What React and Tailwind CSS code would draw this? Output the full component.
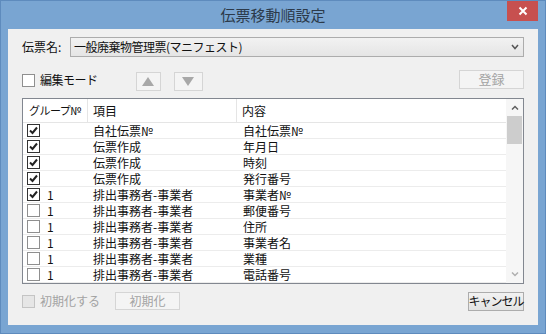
import React from 'react';

const rows = [
  { checked: true, group: '', item: '自社伝票№', content: '自社伝票№' },
  { checked: true, group: '', item: '伝票作成', content: '年月日' },
  { checked: true, group: '', item: '伝票作成', content: '時刻' },
  { checked: true, group: '', item: '伝票作成', content: '発行番号' },
  { checked: true, group: '1', item: '排出事務者-事業者', content: '事業者№' },
  { checked: false, group: '1', item: '排出事務者-事業者', content: '郵便番号' },
  { checked: false, group: '1', item: '排出事務者-事業者', content: '住所' },
  { checked: false, group: '1', item: '排出事務者-事業者', content: '事業者名' },
  { checked: false, group: '1', item: '排出事務者-事業者', content: '業種' },
  { checked: false, group: '1', item: '排出事務者-事業者', content: '電話番号' },
];

const Check = ({ checked, disabled }) => (
  <span
    className={`w-[13px] h-[13px] shrink-0 border flex items-center justify-center ${
      disabled ? 'border-[#c4c4c4] bg-[#e6e6e6]' : checked ? 'border-[#333] bg-white' : 'border-[#8f8f8f] bg-white'
    }`}
  >
    {checked && (
      <svg width="9" height="9" viewBox="0 0 9 9">
        <path d="M1 4.5 L3.5 7 L8 1.5" stroke="#222" strokeWidth="2" fill="none" />
      </svg>
    )}
  </span>
);

const Btn = ({ children, disabled, className = '' }) => (
  <div
    className={`flex items-center justify-center border whitespace-nowrap ${
      disabled
        ? 'border-[#d5d5d5] bg-[#f4f4f4] text-[#a3a3a3]'
        : 'border-[#acacac] bg-gradient-to-b from-[#f2f2f2] to-[#e3e3e3] text-[#111]'
    } ${className}`}
  >
    {children}
  </div>
);

export default function App() {
  return (
    <div
      className="w-[546px] h-[334px] bg-[#79a5d2] border border-[#5e8bbd] flex flex-col relative overflow-hidden text-[12px] text-[#111] whitespace-nowrap"
      style={{ fontFamily: '"Noto Sans CJK JP", "Noto Sans", sans-serif' }}
    >
      {/* Title bar */}
      <div className="h-[28px] flex items-center justify-center text-[15px] text-[#2c3a4a]">
        伝票移動順設定
      </div>
      <div className="absolute right-[7px] top-0 w-[31px] h-[20px] bg-[#c7504f] flex items-center justify-center">
        <svg width="10" height="10" viewBox="0 0 10 10">
          <path d="M1.5 1.5 L8.5 8.5 M8.5 1.5 L1.5 8.5" stroke="#fff" strokeWidth="2" />
        </svg>
      </div>

      {/* Client area */}
      <div className="mx-[7px] h-[296px] bg-[#f0f0f0] px-[14px] pt-[8px] flex flex-col">
        <div className="flex items-center h-[20px]">
          <span className="w-[48px]">伝票名:</span>
          <div className="flex-1 h-[20px] border border-[#acacac] bg-gradient-to-b from-[#f2f2f2] to-[#e5e5e5] flex items-center pl-[3px] pr-[4px]">
            <span className="flex-1 tracking-[-0.5px]">一般廃棄物管理票(マニフェスト)</span>
            <svg width="8" height="6" viewBox="0 0 8 6">
              <path d="M1 1 L4 4.5 L7 1" stroke="#555" strokeWidth="1.5" fill="none" />
            </svg>
          </div>
        </div>

        <div className="flex items-center h-[20px] mt-[13px]">
          <Check checked={false} />
          <span className="ml-[5px] tracking-[-0.5px]">編集モード</span>
          <Btn disabled className="ml-[38px] w-[25px] h-[19px] mt-[3px]">
            <svg width="12" height="9" viewBox="0 0 12 9"><path d="M6 0 L12 9 L0 9 Z" fill="#a8a8a8" /></svg>
          </Btn>
          <Btn disabled className="ml-[13px] w-[29px] h-[19px] mt-[3px]">
            <svg width="12" height="9" viewBox="0 0 12 9"><path d="M0 0 L12 0 L6 9 Z" fill="#a8a8a8" /></svg>
          </Btn>
          <div className="flex-1" />
          <Btn disabled className="w-[65px] h-[19px] -mt-[2px] text-[13px]">登録</Btn>
        </div>

        {/* Table */}
        <div className="mt-[8px] h-[186px] border border-[#828790] bg-white flex">
          <div className="flex-1 flex flex-col">
            <div className="h-[24px] flex border-b border-[#e5e5e5] shrink-0">
              <div className="w-[65px] pl-[6px] border-r border-[#e5e5e5] flex items-center text-[11px] tracking-[-0.5px] overflow-hidden">グループ№</div>
              <div className="w-[149px] pl-[5px] border-r border-[#e5e5e5] flex items-center">項目</div>
              <div className="flex-1 pl-[5px] flex items-center">内容</div>
            </div>
            {rows.map((r, i) => (
              <div key={i} className="h-[16px] flex items-center border-b border-[#ececec] shrink-0">
                <div className="w-[65px] pl-[4px] flex items-center">
                  <Check checked={r.checked} />
                  <span className="ml-[7px]">{r.group}</span>
                </div>
                <div className="w-[149px] pl-[5px]">{r.item}</div>
                <div className="flex-1 pl-[6px]">{r.content}</div>
              </div>
            ))}
          </div>
          <div className="w-[17px] bg-[#f6f6f6] flex flex-col items-center">
            <div className="h-[17px] flex items-center justify-center">
              <svg width="8" height="5" viewBox="0 0 8 5"><path d="M1 4.5 L4 1.5 L7 4.5" stroke="#606060" strokeWidth="1.5" fill="none" /></svg>
            </div>
            <div className="w-[15px] h-[28px] bg-[#cdcdcd]" />
            <div className="flex-1" />
            <div className="h-[17px] flex items-center justify-center">
              <svg width="8" height="5" viewBox="0 0 8 5"><path d="M1 0.5 L4 3.5 L7 0.5" stroke="#b0b0b0" strokeWidth="1.5" fill="none" /></svg>
            </div>
          </div>
        </div>

        <div className="mt-[8px] h-[18px] flex items-center">
          <Check disabled />
          <span className="ml-[5px] text-[#a3a3a3]">初期化する</span>
          <Btn disabled className="ml-[15px] w-[65px] h-[18px]">初期化</Btn>
          <div className="flex-1" />
          <Btn className="w-[56px] h-[19px] tracking-[-1px]">キャンセル</Btn>
        </div>
      </div>
    </div>
  );
}
